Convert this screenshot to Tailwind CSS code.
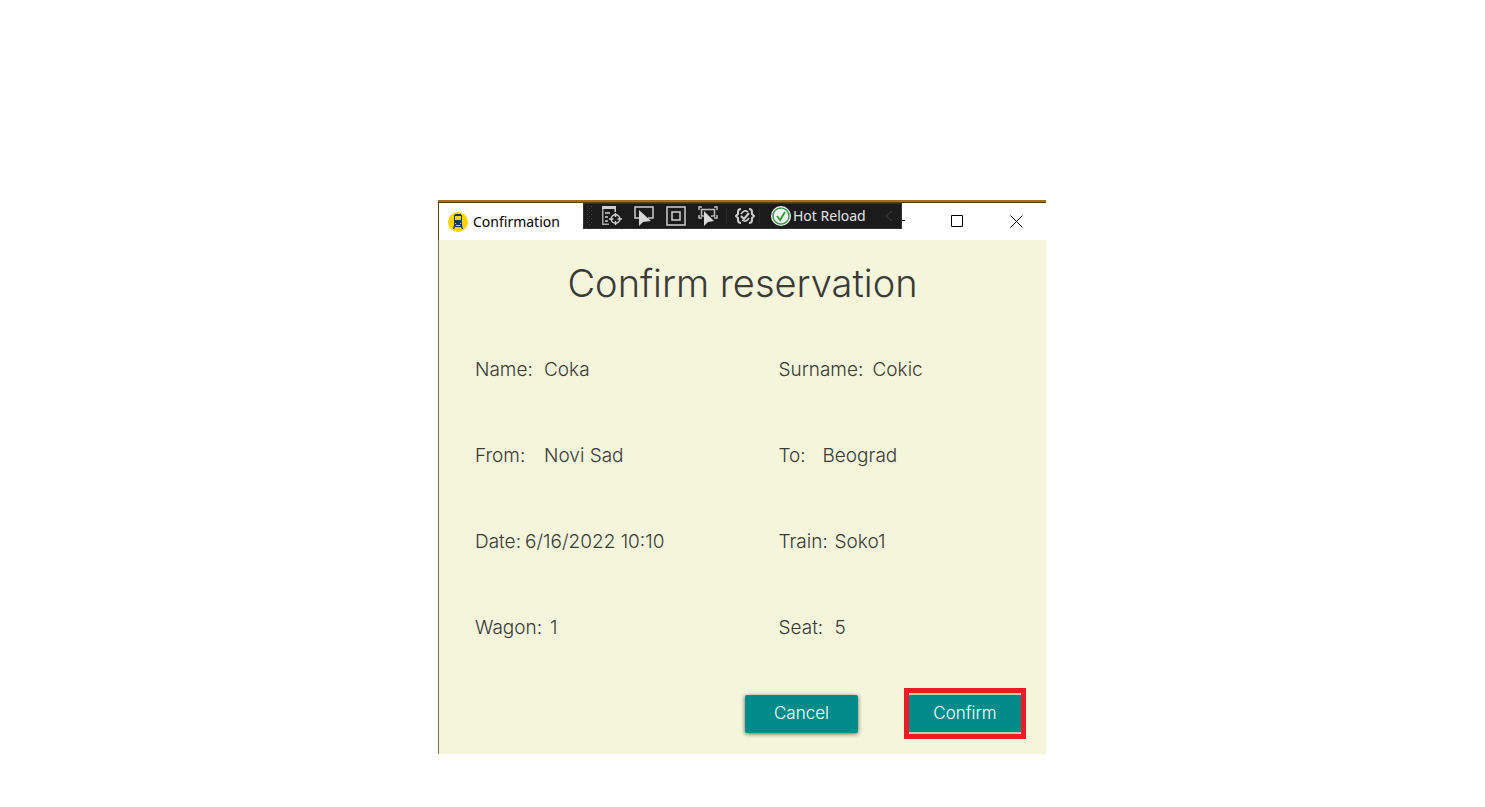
<!DOCTYPE html>
<html lang="en">
<head>
<meta charset="utf-8">
<title>Confirmation</title>
<script src="https://cdn.jsdelivr.net/npm/@tailwindcss/browser@4"></script>
</head>
<body class="bg-white min-h-screen flex justify-center items-start pt-[200px] pr-px font-['Inter',sans-serif]">
<main class="relative w-full max-w-[608px] border-t-2 border-[#a07208]">
  <header class="flex h-[38px] items-center border-t border-l border-[#54420f] bg-white font-['Noto_Sans',sans-serif]">
    <svg class="ml-[9px] size-5" viewBox="0 0 20 20"><circle cx="10" cy="10" r="10" fill="#ffd400"/><path fill="#17365a" d="M7 2h6v1h1v10H6V3h1zM6 13h2l-2 4H5zM12 13h2l1 4h-1zM6 14h8v1H6z"/><path fill="#ffd400" d="M7 4h6v4H7zM7 11h1v1H7zM12 11h1v1h-1z"/></svg>
    <h1 class="ml-[5px] text-[14px] text-black">Confirmation</h1>
    <div class="ml-auto flex items-center pr-[23px] text-black">
      <button aria-label="Minimize" class="mr-[46px]"><svg class="w-[11px] h-[13px]" viewBox="0 0 11 13"><path d="M0 5.500h11" stroke="currentColor"/></svg></button>
      <button aria-label="Maximize" class="mr-[46px]"><svg class="w-[13px] h-[13px]" viewBox="0 0 13 13"><path d="M.5.5h11v11H.5z" fill="none" stroke="currentColor"/></svg></button>
      <button aria-label="Close"><svg class="w-[13px] h-[13px]" viewBox="0 0 13 13"><path d="m.5.5 12 12m0-12-12 12" stroke="currentColor"/></svg></button>
    </div>
  </header>
  <div class="absolute left-[145px] top-px flex h-[26px] w-[319px] items-center border border-[#333337] bg-[#1b1b1c] text-[#e4e4e4] font-['Noto_Sans',sans-serif]">
    <svg class="h-6 w-[10px]" viewBox="0 0 10 24" fill="#48484b"><path d="M3 2h1v1H3zM7 2h1v1H7zM5 4h1v1H5zM3 6h1v1H3zM7 6h1v1H7zM5 8h1v1H5zM3 10h1v1H3zM7 10h1v1H7zM5 12h1v1H5zM3 14h1v1H3zM7 14h1v1H7zM5 16h1v1H5zM3 18h1v1H3zM7 18h1v1H7zM5 20h1v1H5z"/></svg>
    <button aria-label="Go to live visual tree" class="ml-2"><svg class="size-5" viewBox="0 0 20 20" fill="none" stroke="#cfcfcf" stroke-width="1.500"><path d="M0 1.500h14" stroke-width="3"/><path d="M.75 3v15.250H7" stroke="#a8a8a8"/><path d="M13.250 3v3M3 7h5M3 11h3M3 15h3"/><circle cx="13.500" cy="13" r="4.250"/><path d="M13.500 7v4M13.500 15v4M7 13h4.500M15.500 13H20"/></svg></button>
    <button aria-label="Select element" class="ml-3"><svg class="size-5" viewBox="0 0 20 20"><path d="M5 12H1V1h18v11h-5" fill="none" stroke="#cfcfcf" stroke-width="1.500"/><path d="M5 4v16l4-4 8-1z" fill="#d8d8d8"/></svg></button>
    <button aria-label="Display layout adorners" class="ml-3"><svg class="size-5" viewBox="0 0 20 20" fill="none" stroke="#cfcfcf" stroke-width="1.500"><path d="M1 1h18v18H1zM6 6h8v8H6z"/></svg></button>
    <button aria-label="Track focused element" class="ml-3"><svg class="size-5" viewBox="0 0 20 20"><path d="M1 4V1h3M16 1h3v3M1 9v3h3M16 12h3V9M6 10H3.500V3.500h13V10H13" fill="none" stroke="#bdbdbd" stroke-width="1.500"/><path d="M6 5v15l4-4 6-1z" fill="#d8d8d8"/></svg></button>
    <span class="ml-2 h-4 w-px bg-[#29292b]"></span>
    <button aria-label="Binding failures" class="ml-2"><svg class="size-5" viewBox="0 0 20 20" fill="none" stroke="#cfcfcf" stroke-width="2"><path d="M6 3Q3 3 3 6v2l-2 2 2 2v2q0 3 3 3M14 3q3 0 3 3v2l2 2-2 2v2q0 3-3 3"/><path d="M6 8q3-5 7-2M14 12q-3 5-7 2" stroke-width="1.500"/><path d="m6 10 3 3 5-6"/></svg></button>
    <span class="ml-1 h-4 w-px bg-[#29292b]"></span>
    <button class="ml-[11px] flex items-center gap-0.5 whitespace-nowrap text-[14px] leading-5"><svg class="size-5" viewBox="0 0 20 20"><circle cx="10" cy="10" r="10" fill="#f4f4f4"/><circle cx="10" cy="10" r="8" fill="none" stroke="#389b45" stroke-width="1.500"/><path d="m6 10 3 4 5-8" fill="none" stroke="#389b45" stroke-width="2"/></svg>Hot Reload</button>
    <button aria-label="Collapse" class="ml-auto mr-2"><svg class="h-3 w-2" viewBox="0 0 8 12"><path d="M7 1 1 6l6 5" fill="none" stroke="#4b4b4e"/></svg></button>
  </div>
  <section class="border-l border-[#77755f] bg-[#f5f5dc] pt-[19px] pb-[15px] text-[#3a3a37]">
    <h2 class="text-center text-[38px] leading-[48px] font-light">Confirm reservation</h2>
    <dl class="ml-9 mt-5 grid grid-cols-2 text-[19px] font-light leading-[86px] [&>div]:flex [&>div]:whitespace-nowrap">
      <div><dt class="w-[69px]">Name:</dt><dd>Coka</dd></div>
      <div class="ml-[18px]"><dt class="w-[94px]">Surname:</dt><dd>Cokic</dd></div>
      <div><dt class="w-[69px]">From:</dt><dd>Novi Sad</dd></div>
      <div class="ml-[18px]"><dt class="w-11">To:</dt><dd>Beograd</dd></div>
      <div><dt class="w-[50px]">Date:</dt><dd>6/16/2022 10:10</dd></div>
      <div class="ml-[18px]"><dt class="w-14">Train:</dt><dd>Soko1</dd></div>
      <div><dt class="w-[75px]">Wagon:</dt><dd>1</dd></div>
      <div class="ml-[18px]"><dt class="w-14">Seat:</dt><dd>5</dd></div>
    </dl>
    <div class="mt-[17px] flex items-center justify-end gap-[46px] pr-5 text-[17px] font-light text-white">
      <button class="h-[38px] w-[113px] rounded-xs bg-[#008b8b] shadow-[0_1px_4px_rgba(0,0,0,.6)]">Cancel</button>
      <span class="border-[5px] border-[#ed1c24]"><button class="block h-[41px] w-28 rounded-xs border-y-2 border-[#c5cbb8] bg-[#008b8b]">Confirm</button></span>
    </div>
  </section>
</main>
</body>
</html>
